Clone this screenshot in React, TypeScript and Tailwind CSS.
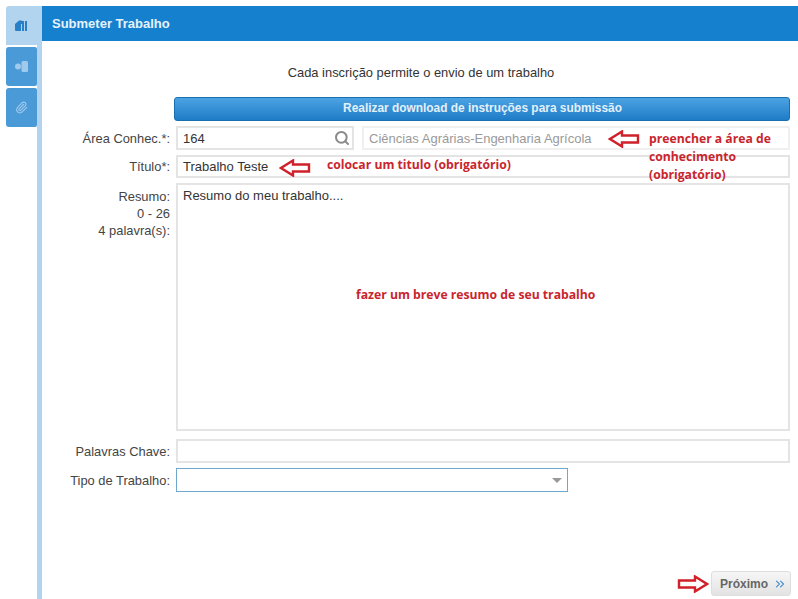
import { Search, ChevronsRight, Paperclip } from "lucide-react";

const labelClass = "w-[128px] shrink-0 text-right text-[12.9px] leading-[17px] text-[#444]";
const inputClass = "border-2 bg-white pl-[5px] flex text-[13px]";
const noteClass = "absolute font-['Open_Sans',sans-serif] font-bold text-[12.2px] leading-[18px] text-[#c9252d]";

function Arrow({ className, right }: { className: string; right?: boolean }) {
  return (
    <svg className={className} viewBox="0 0 32 18" fill="#fff" stroke="#d0202a" strokeWidth="2.4">
      <path d={right ? "M2 5.5H18V1.5L30 9 18 16.5V12.5H2Z" : "M30 5.5H14V1.5L2 9 14 16.5V12.5H30Z"} />
    </svg>
  );
}

function SideTabs() {
  return (
    <div className="w-[36px] shrink-0 flex flex-col">
      <div className="h-[39px] bg-[#b3d4ef] rounded-tl-[3px] pr-[6px] flex items-center justify-center">
        <svg width="12" height="11" viewBox="0 0 12 11" fill="#2a80c6">
          <path d="M0 4 4 0.5H7V4H0Z" />
          <path d="M0 4h6v7H1a1 1 0 0 1-1-1Z" />
          <path d="M7 1h2v10H7ZM10 1h2v10h-2Z" />
        </svg>
      </div>
      <div className="flex-1 flex">
        <div className="w-[31px] flex flex-col">
          <div className="mt-[2px] h-[39px] bg-[#4b9ad8] rounded-l-[3px] rounded-r-[2px] flex items-center justify-center">
            <svg width="13" height="11" viewBox="0 0 13 11" fill="#a0caec">
              <circle cx="3" cy="5.5" r="3" />
              <rect x="6.5" y="0" width="6.5" height="11" rx="1.5" />
            </svg>
          </div>
          <div className="mt-[2px] h-[39px] bg-[#4b9ad8] rounded-l-[3px] rounded-r-[2px] flex items-center justify-center">
            <Paperclip size={13} strokeWidth={2} className="text-[#a0caec]" />
          </div>
        </div>
        <div className="w-[5px] bg-[#b3d4ef]" />
      </div>
    </div>
  );
}

export default function App() {
  return (
    <div className="relative w-[798px] h-[599px] overflow-hidden bg-white pt-[6px] pl-[6px] font-['Liberation_Sans',Arial,sans-serif]">
      <div className="flex h-[593px]">
        <SideTabs />
        <div className="flex-1 flex flex-col">
          <div className="h-[35px] bg-[#1580ce] pl-[10px] flex items-center text-[13px] font-bold text-[#e6f2fb]">
            Submeter Trabalho
          </div>
          <div className="flex-1 flex flex-col">
            <p className="mt-[24px] h-[16px] pl-[2px] text-center text-[12.9px] leading-[16px] text-[#333]">
              Cada inscrição permite o envio de um trabalho
            </p>
            <div className="mt-[16px] ml-[132px] mr-[8px] h-[24px] rounded-[3px] border border-[#1a6fae] bg-gradient-to-b from-[#4ba3e3] to-[#1d7cc6] pl-[1px] flex items-center justify-center text-[11.9px] font-bold text-[#e3f0fa]">
              Realizar download de instruções para submissão
            </div>

            <div className="mt-[5px] mr-[8px] flex items-center gap-[6px]">
              <span className={labelClass}>Área Conhec.*:</span>
              <div className={`${inputClass} border-[#e4e4e4] text-[#333] items-center h-[24px] w-[178px] justify-between pr-[2px]`}>
                <span className="pt-[1px]">164</span>
                <Search size={16} strokeWidth={3} className="text-[#8a8a8a]" />
              </div>
              <div className={`${inputClass} border-[#f0f0f0] text-[#9a9a9a] items-center ml-[2px] h-[24px] flex-1`}>
                <span className="pt-[1px]">Ciências Agrárias-Engenharia Agrícola</span>
              </div>
            </div>

            <div className="mt-[5px] mr-[8px] flex items-center gap-[6px]">
              <span className={labelClass}>Título*:</span>
              <div className={`${inputClass} border-[#e4e4e4] text-[#333] items-center h-[23px] flex-1`}>
                <span className="pt-[1px]">Trabalho Teste</span>
              </div>
            </div>

            <div className="mt-[5px] mr-[8px] flex items-start gap-[6px]">
              <span className={`${labelClass} pt-[5px]`}>
                Resumo:
                <br />0 - 26
                <br />4 palavra(s):
              </span>
              <div className={`${inputClass} border-[#e4e4e4] text-[#333] items-start h-[248px] flex-1 pt-[2px] leading-[17px]`}>
                Resumo do meu trabalho....
              </div>
            </div>

            <div className="mt-[8px] mr-[8px] flex items-center gap-[6px]">
              <span className={labelClass}>Palavras Chave:</span>
              <div className={`${inputClass} border-[#e4e4e4] h-[24px] flex-1`} />
            </div>

            <div className="mt-[5px] flex items-center gap-[6px]">
              <span className={labelClass}>Tipo de Trabalho:</span>
              <div className="h-[24px] w-[392px] border border-[#6fa8cf] flex items-center justify-end pr-[5px]">
                <div className="w-0 h-0 border-x-[5px] border-x-transparent border-t-[5px] border-t-[#999]" />
              </div>
            </div>

            <div className="mt-[79px] mr-[7px] self-end h-[25px] w-[80px] rounded-[3px] border border-[#dedede] bg-gradient-to-b from-[#f6f6f6] to-[#e3e3e3] pl-[8px] pr-[3px] flex items-center justify-between text-[12px] font-bold text-[#666]">
              Próximo
              <ChevronsRight size={14} strokeWidth={2} className="text-[#4b8fcf]" />
            </div>
          </div>
        </div>
      </div>

      {/* anotacoes em vermelho por cima do formulario */}
      <Arrow className="absolute left-[608px] top-[130px] w-[32px] h-[18px]" />
      <div className={`${noteClass} left-[649px] top-[130px] w-[130px]`}>
        preencher a área de conhecimento (obrigatório)
      </div>
      <Arrow className="absolute left-[279px] top-[159px] w-[32px] h-[18px]" />
      <div className={`${noteClass} left-[327px] top-[156px]`}>colocar um titulo (obrigatório)</div>
      <div className={`${noteClass} left-[356px] top-[286px]`}>fazer um breve resumo de seu trabalho</div>
      <Arrow right className="absolute left-[677px] top-[575px] w-[32px] h-[18px]" />
    </div>
  );
}
